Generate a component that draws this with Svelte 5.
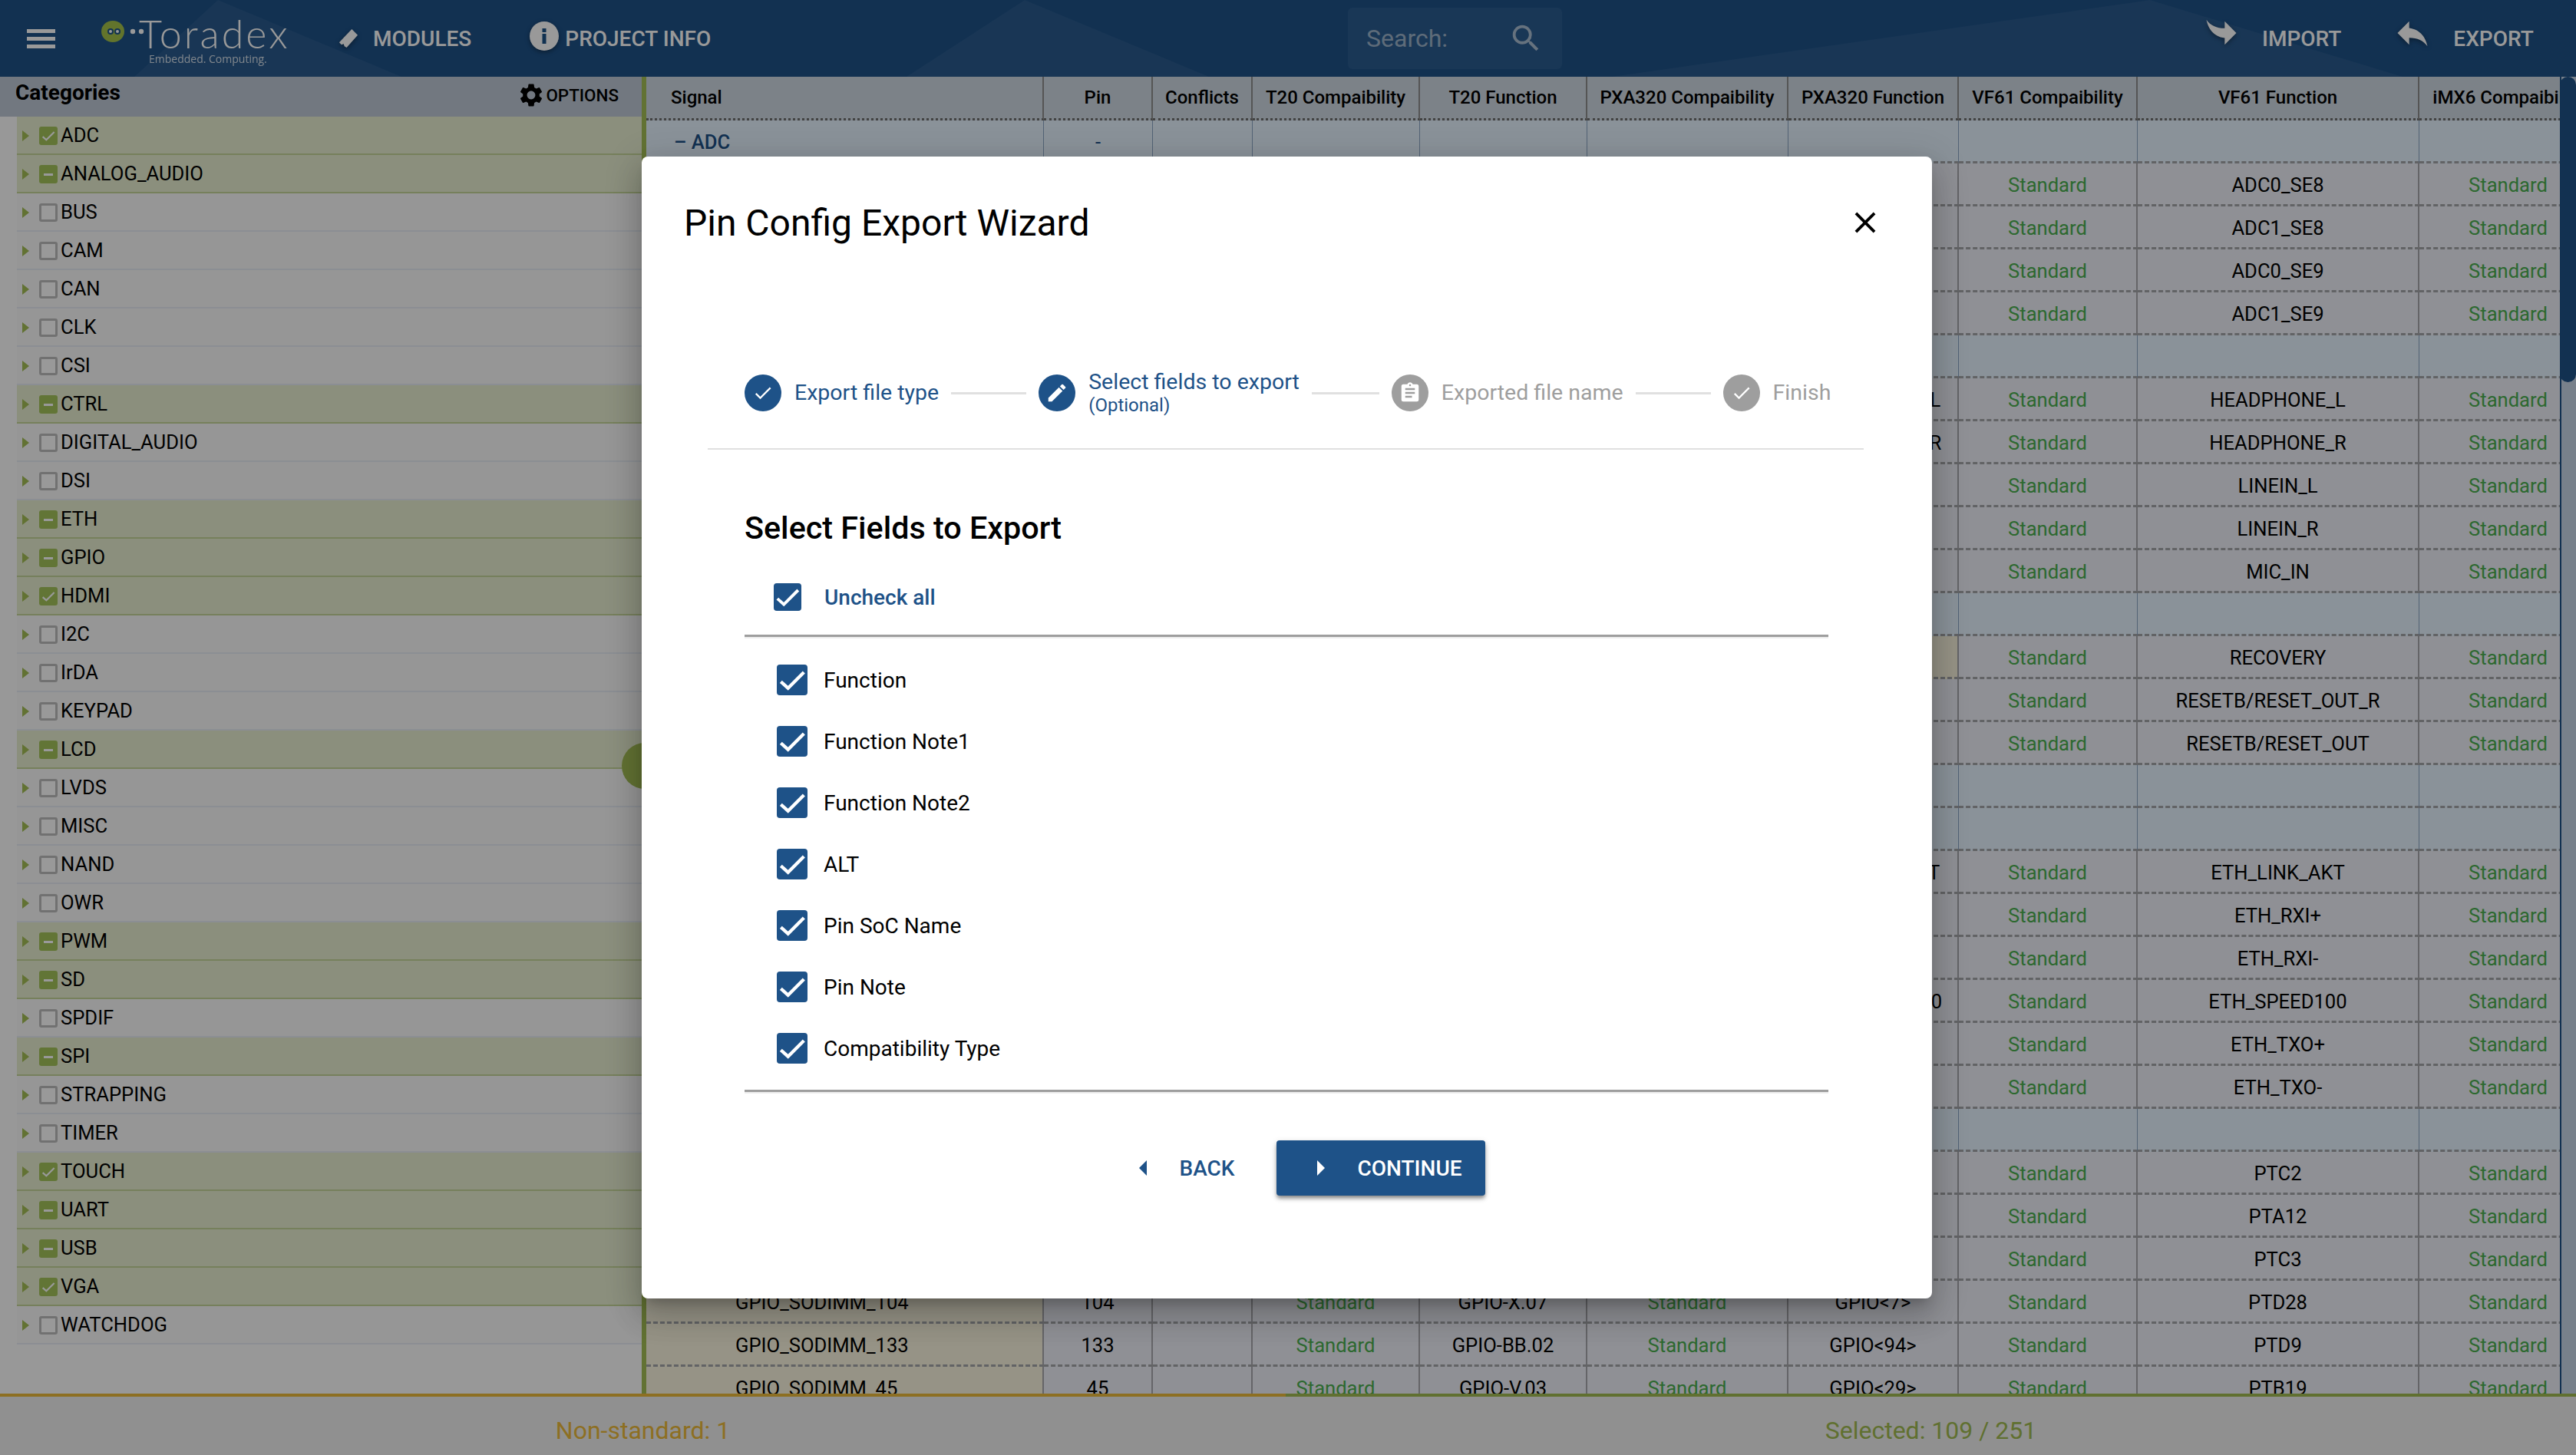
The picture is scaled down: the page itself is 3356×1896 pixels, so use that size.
<script>
	const categories = [
		['ADC', 'all'], ['ANALOG_AUDIO', 'some'], ['BUS', ''], ['CAM', ''], ['CAN', ''], ['CLK', ''], ['CSI', ''],
		['CTRL', 'some'], ['DIGITAL_AUDIO', ''], ['DSI', ''], ['ETH', 'some'], ['GPIO', 'some'], ['HDMI', 'all'],
		['I2C', ''], ['IrDA', ''], ['KEYPAD', ''], ['LCD', 'some'], ['LVDS', ''], ['MISC', ''], ['NAND', ''], ['OWR', ''],
		['PWM', 'some'], ['SD', 'some'], ['SPDIF', ''], ['SPI', 'some'], ['STRAPPING', ''], ['TIMER', ''],
		['TOUCH', 'all'], ['UART', 'some'], ['USB', 'some'], ['VGA', 'all'], ['WATCHDOG', '']
	];

	const columns = [
		'Signal', 'Pin', 'Conflicts', 'T20 Compaibility', 'T20 Function',
		'PXA320 Compaibility', 'PXA320 Function', 'VF61 Compaibility', 'VF61 Function', 'iMX6 Compaibility'
	];

	// only cells not hidden by the dialog carry the full data
	const row = (vf, pxa = '', tan = false) => ({ vf, pxa, tan });
	const pin = (signal, no, t20, pxa, vf) => ({ signal, no, t20, pxa, vf, full: true });
	const group = { group: true };

	const rows = [
		{ group: true, label: 'ADC' },
		row('ADC0_SE8'), row('ADC1_SE8'), row('ADC0_SE9'), row('ADC1_SE9'),
		group,
		row('HEADPHONE_L', 'HEADPHONE_L'), row('HEADPHONE_R', 'HEADPHONE_R'), row('LINEIN_L'), row('LINEIN_R'), row('MIC_IN'),
		group,
		row('RECOVERY', '', true), row('RESETB/RESET_OUT_R'), row('RESETB/RESET_OUT'),
		group, group,
		row('ETH_LINK_AKT', 'ETH_LINK_AKT'), row('ETH_RXI+'), row('ETH_RXI-'), row('ETH_SPEED100', 'ETH_SPEED100'), row('ETH_TXO+'), row('ETH_TXO-'),
		group,
		row('PTC2'), row('PTA12'), row('PTC3'),
		pin('GPIO_SODIMM_104', '104', 'GPIO-X.07', 'GPIO<7>', 'PTD28'),
		pin('GPIO_SODIMM_133', '133', 'GPIO-BB.02', 'GPIO<94>', 'PTD9'),
		pin('GPIO_SODIMM_45', '45', 'GPIO-V.03', 'GPIO<29>', 'PTB19')
	];

	const steps = [
		{ label: 'Export file type', icon: 'done', active: true },
		{ label: 'Select fields to export', sub: '(Optional)', icon: 'edit', active: true },
		{ label: 'Exported file name', icon: 'note' },
		{ label: 'Finish', icon: 'done' }
	];

	const fields = ['Function', 'Function Note1', 'Function Note2', 'ALT', 'Pin SoC Name', 'Pin Note', 'Compatibility Type'];
</script>

{#snippet tick()}
	<svg viewBox="0 0 24 24"><path d="M3.2 13.400l5.600 5L21.200 6" fill="none" stroke="#fff" stroke-width="2.600" /></svg>
{/snippet}

<div class="page">
	<header class="topbar">
		<svg class="facets" viewBox="0 0 3356 100" preserveAspectRatio="none">
			<polygon points="284,0 175,100 523,100" />
			<polygon points="1335,0 1181,100 1575,100" />
			<polygon points="2801,0 2100,100 3130,100" />
		</svg>
		<div class="bar-left">
			<div class="burger"><span></span><span></span><span></span></div>
			<div class="logo">
				<svg class="logo-mark" viewBox="0 0 60 28">
					<ellipse cx="15" cy="14" rx="15" ry="14" fill="#a3c14a" />
					<circle cx="12" cy="14" r="4" fill="#1c5288" />
					<circle cx="21" cy="14" r="4" fill="#1c5288" />
					<circle cx="12" cy="14" r="2" fill="#fff" />
					<circle cx="21" cy="14" r="2" fill="#fff" />
					<circle cx="41" cy="14" r="3.200" fill="#fff" />
					<circle cx="52" cy="14" r="3.200" fill="#fff" />
				</svg>
				<div class="logo-name">Toradex</div>
				<div class="logo-tag">Embedded. Computing.</div>
			</div>
			<div class="nav modules">
				<svg viewBox="0 0 28 28"><path d="M19 1l8 8-15 17-3-2-1-3-3 1-3-3z" fill="#fff" /></svg>
				<span>MODULES</span>
			</div>
			<div class="nav info">
				<svg viewBox="0 0 38 38">
					<circle cx="19" cy="19" r="19" fill="#fff" />
					<rect x="16.500" y="16" width="5" height="13" fill="#1c5288" />
					<rect x="16.500" y="9" width="5" height="5" fill="#1c5288" />
				</svg>
				<span>PROJECT INFO</span>
			</div>
		</div>
		<div class="search">
			<span>Search:</span>
			<svg viewBox="0 0 24 24"><path d="M15.500 14h-.79l-.28-.27A6.470 6.470 0 0 0 16 9.500 6.500 6.500 0 1 0 9.500 16c1.610 0 3.090-.59 4.230-1.570l.27.28v.79l5 4.990L20.490 19l-4.990-5zm-6 0C7.010 14 5 11.990 5 9.500S7.010 5 9.500 5 14 7.010 14 9.500 11.990 14 9.500 14z" /></svg>
		</div>
		<div class="bar-right">
			<div class="nav import">
				<svg viewBox="0 0 24 24"><path d="M14 15v4l7-7-7-7v4.100c-5 0-8.500-1.600-11-5.100 1 5 4 10 11 11z" /></svg>
				<span>IMPORT</span>
			</div>
			<div class="nav export">
				<svg viewBox="0 0 24 24"><path d="M10 9V5l-7 7 7 7v-4.100c5 0 8.500 1.600 11 5.100-1-5-4-10-11-11z" /></svg>
				<span>EXPORT</span>
			</div>
		</div>
	</header>

	<main class="body">
		<aside class="sidebar">
			<div class="side-head">
				<span class="side-title">Categories</span>
				<span class="options">
					<svg viewBox="0 0 24 24"><path d="M19.140 12.940c.04-.3.06-.61.06-.94 0-.32-.02-.64-.07-.94l2.030-1.580a.49.49 0 0 0 .12-.61l-1.920-3.320a.488.488 0 0 0-.59-.22l-2.390.96c-.5-.38-1.030-.7-1.620-.94l-.36-2.540a.484.484 0 0 0-.48-.41h-3.840c-.24 0-.43.17-.47.41l-.36 2.540c-.59.24-1.130.57-1.620.94l-2.390-.96c-.22-.08-.47 0-.59.22L2.740 8.870c-.12.21-.08.47.12.61l2.030 1.580c-.05.3-.09.63-.09.94s.02.64.07.94l-2.030 1.580a.49.49 0 0 0-.12.61l1.920 3.320c.12.22.37.29.59.22l2.390-.96c.5.38 1.030.7 1.620.94l.36 2.540c.05.24.24.41.48.41h3.840c.24 0 .44-.17.47-.41l.36-2.540c.59-.24 1.130-.56 1.620-.94l2.390.96c.22.08.47 0 .59-.22l1.920-3.320c.12-.22.07-.47-.12-.61l-2.010-1.580zM12 15.600c-1.980 0-3.600-1.620-3.600-3.600s1.620-3.600 3.600-3.600 3.600 1.620 3.600 3.600-1.620 3.600-3.600 3.600z" /></svg>
					OPTIONS
				</span>
			</div>
			<ul class="cats">
				{#each categories as [name, state]}
					<li class="cat" class:on={state}>
						<svg class="caret" viewBox="0 0 9 14"><path d="M0 0l9 7-9 7z" /></svg>
						<span class="box {state}">
							{#if state === 'all'}
								{@render tick()}
							{:else if state === 'some'}
								<i></i>
							{/if}
						</span>
						{name}
					</li>
				{/each}
			</ul>
			<div class="fab"><i></i><i></i><i></i></div>
		</aside>

		<section class="grid">
			<div class="table-wrap">
				<table>
					<colgroup>
						<col style="width:518px" /><col style="width:142px" /><col style="width:130px" />
						<col style="width:218px" /><col style="width:218px" /><col style="width:262px" />
						<col style="width:222px" /><col style="width:233px" /><col style="width:367px" />
						<col style="width:233px" />
					</colgroup>
					<thead>
						<tr>
							{#each columns as col, i}
								<th class:first={i === 0}>{col}</th>
							{/each}
						</tr>
					</thead>
					<tbody>
						{#each rows as r}
							{#if r.group}
								<tr class="group">
									<td class="group-name">{#if r.label}– {r.label}{/if}</td>
									<td>{r.label ? '-' : ''}</td>
									{#each Array(8) as _}<td></td>{/each}
								</tr>
							{:else}
								<tr>
									<td class="signal" class:tan={r.full}>{r.signal ?? ''}</td>
									<td>{r.no ?? ''}</td>
									<td></td>
									<td class="std">{r.full ? 'Standard' : ''}</td>
									<td>{r.t20 ?? ''}</td>
									<td class="std">{r.full ? 'Standard' : ''}</td>
									<td class:tan={r.tan}>{r.pxa}</td>
									<td class="std">Standard</td>
									<td>{r.vf}</td>
									<td class="std">Standard</td>
								</tr>
							{/if}
						{/each}
					</tbody>
				</table>
			</div>
			<div class="scroll"><div class="thumb"></div></div>
		</section>
	</main>

	<footer class="totals">
		<div class="warn">Non-standard: 1</div>
		<div class="ok">Selected: 109 / 251</div>
	</footer>

	<div class="backdrop">
		<div class="dialog">
			<div class="dialog-head">
				<h2>Pin Config Export Wizard</h2>
				<svg class="close" viewBox="0 0 24 24"><path d="M19 6.410 17.590 5 12 10.590 6.410 5 5 6.410 10.590 12 5 17.590 6.410 19 12 13.410 17.590 19 19 17.590 13.410 12z" /></svg>
			</div>

			<div class="stepper">
				{#each steps as step, i}
					{#if i > 0}<div class="link"></div>{/if}
					<div class="step" class:active={step.active} class:two-line={step.sub}>
						<span class="dot">
							{#if step.icon === 'done'}
								<svg viewBox="0 0 24 24"><path d="M9 16.200 4.800 12l-1.400 1.400L9 19 21 7l-1.400-1.400z" transform="translate(3.600 3.600) scale(.7)" /></svg>
							{:else if step.icon === 'edit'}
								<svg viewBox="0 0 24 24"><path d="M3 17.250V21h3.750L17.810 9.940l-3.750-3.750L3 17.250zM20.710 7.040a1 1 0 0 0 0-1.410l-2.340-2.340a1 1 0 0 0-1.410 0l-1.830 1.830 3.750 3.750 1.830-1.830z" transform="translate(3 3) scale(.75)" /></svg>
							{:else}
								<svg viewBox="0 0 24 24"><path d="M19 3h-4.180C14.400 1.840 13.300 1 12 1s-2.400.84-2.820 2H5a2 2 0 0 0-2 2v14a2 2 0 0 0 2 2h14a2 2 0 0 0 2-2V5a2 2 0 0 0-2-2zm-7 0a1 1 0 1 1 0 2 1 1 0 0 1 0-2zm2 14H7v-2h7v2zm3-4H7v-2h10v2zm0-4H7V7h10v2z" transform="translate(3 3) scale(.75)" /></svg>
							{/if}
						</span>
						<span class="step-text">
							{step.label}
							{#if step.sub}<small>{step.sub}</small>{/if}
						</span>
					</div>
				{/each}
			</div>

			<div class="fields">
				<h3>Select Fields to Export</h3>
				<div class="check-all">
					<span class="check small">{@render tick()}</span>
					Uncheck all
				</div>
				<div class="rule"></div>
				<ul class="field-list">
					{#each fields as field}
						<li><span class="check">{@render tick()}</span>{field}</li>
					{/each}
				</ul>
				<div class="rule"></div>
				<div class="actions">
					<button class="back">
						<svg viewBox="0 0 10 20"><path d="M10 0L0 10l10 10z" /></svg>
						BACK
					</button>
					<button class="next">
						<svg viewBox="0 0 10 20"><path d="M0 0l10 10L0 20z" /></svg>
						CONTINUE
					</button>
				</div>
			</div>
		</div>
	</div>
</div>

<style>
	:global(body) {
		margin: 0;
		background: #fff;
	}

	.page {
		position: relative;
		display: flex;
		flex-direction: column;
		width: 3356px;
		height: 1896px;
		overflow: hidden;
		font-family: Roboto, "Liberation Sans", sans-serif;
		font-size: 25.6px;
		color: #000;
	}

	/* top bar */
	.topbar {
		position: relative;
		display: flex;
		align-items: center;
		flex: 0 0 100px;
		background: #1e5288;
		color: #fff;
	}

	.facets {
		position: absolute;
		inset: 0;
		width: 100%;
		height: 100%;
		fill: rgba(255, 255, 255, 0.055);
	}

	.bar-left {
		position: relative;
		display: flex;
		align-items: center;
		flex: 0 0 1756px;
	}

	.burger {
		display: flex;
		flex-direction: column;
		gap: 5px;
		width: 37px;
		margin-left: 35px;
	}

	.burger span {
		height: 5px;
		background: #fff;
	}

	.logo {
		position: relative;
		width: 241px;
		height: 70px;
		margin-left: 60px;
	}

	.logo-mark {
		position: absolute;
		left: 0;
		top: 12px;
		width: 60px;
		height: 28px;
	}

	.logo-name {
		position: absolute;
		left: 49px;
		top: 0;
		font-family: Lato, sans-serif;
		font-weight: 300;
		font-size: 52px;
		line-height: 56px;
		letter-spacing: 3px;
		white-space: nowrap;
	}

	.logo-tag {
		position: absolute;
		left: 62px;
		top: 52px;
		font-family: "Open Sans", sans-serif;
		font-size: 14px;
		line-height: 20px;
		opacity: 0.8;
		white-space: nowrap;
	}

	.nav {
		display: flex;
		align-items: center;
		font-weight: 500;
		font-size: 28px;
		white-space: nowrap;
	}

	.nav svg {
		fill: #fff;
		filter: drop-shadow(0 2px 3px rgba(0, 0, 0, 0.4));
	}

	.modules {
		margin-left: 67px;
		gap: 19px;
	}

	.modules svg {
		width: 27px;
		height: 27px;
	}

	.info {
		margin-left: 76px;
		gap: 8px;
	}

	.info svg {
		width: 38px;
		height: 38px;
		margin-top: -6px;
	}

	.search {
		position: relative;
		display: flex;
		align-items: center;
		justify-content: space-between;
		box-sizing: border-box;
		flex: 0 0 279px;
		height: 80px;
		padding: 0 24px;
		border-radius: 6px;
		background: rgba(255, 255, 255, 0.06);
		color: rgba(255, 255, 255, 0.55);
		font-size: 32px;
	}

	.search svg {
		width: 46px;
		height: 46px;
		fill: rgba(255, 255, 255, 0.6);
	}

	.bar-right {
		position: relative;
		display: flex;
		align-items: center;
		margin-left: 833px;
		gap: 67px;
	}

	.bar-right .nav {
		gap: 27px;
	}

	.bar-right svg {
		width: 52px;
		height: 52px;
		margin-top: -14px;
	}

	/* main area */
	.body {
		display: flex;
		flex: 1;
		min-height: 0;
	}

	.sidebar {
		position: relative;
		flex: 0 0 842px;
		box-sizing: border-box;
		border-right: 6px solid #a3be55;
		background: #fdfdfd;
	}

	.side-head {
		display: flex;
		justify-content: space-between;
		box-sizing: border-box;
		height: 52px;
		padding: 0 30px 0 20px;
		background: #bec9d6;
	}

	.side-title {
		font-weight: 700;
		font-size: 28px;
		line-height: 42px;
	}

	.options {
		display: flex;
		align-items: center;
		gap: 1px;
		height: 48px;
		font-size: 22.4px;
		font-weight: 500;
	}

	.options svg {
		width: 36px;
		height: 36px;
	}

	.cats {
		margin: 0;
		padding: 0 0 0 22px;
		list-style: none;
	}

	.cat {
		display: flex;
		align-items: center;
		box-sizing: border-box;
		height: 50px;
		border-bottom: 2px solid #e8edf5;
		background: #fafafa;
	}

	.cat.on {
		border-bottom-color: #c5d69a;
		background: #e8eed0;
	}

	.caret {
		flex: none;
		width: 9px;
		height: 14px;
		margin: 2px 13px 0 7px;
		fill: #a3be55;
	}

	.box {
		display: flex;
		align-items: center;
		justify-content: center;
		box-sizing: border-box;
		flex: none;
		width: 24px;
		height: 24px;
		margin: 2px 4px 0 0;
		border: 3px solid #bdbdbd;
		border-radius: 3px;
		background: #fff;
	}

	.box.all,
	.box.some {
		border: none;
		background: #a3c45a;
	}

	.box svg {
		width: 20px;
		height: 20px;
	}

	.box i {
		width: 12px;
		height: 3px;
		background: #fff;
	}

	.fab {
		position: absolute;
		left: 810px;
		top: 868px;
		display: flex;
		flex-direction: column;
		align-items: center;
		justify-content: center;
		gap: 3px;
		width: 60px;
		height: 60px;
		border-radius: 50%;
		background: #a3be55;
	}

	.fab i {
		width: 6px;
		height: 6px;
		border-radius: 50%;
		background: #fff;
	}

	/* signal table */
	.grid {
		display: flex;
		flex: 1;
		min-width: 0;
		background: #eef0f8;
	}

	.table-wrap {
		flex: 1;
		min-width: 0;
		overflow: hidden;
	}

	table {
		table-layout: fixed;
		width: 2543px;
		border-collapse: separate;
		border-spacing: 0;
	}

	th {
		box-sizing: border-box;
		height: 57px;
		border-right: 2px solid #8e8e8e;
		border-bottom: 3px dotted #6f6f6f;
		background: #cfd9e3;
		font-size: 24px;
		font-weight: 500;
		text-align: center;
		white-space: nowrap;
	}

	th.first {
		padding-left: 32px;
		text-align: left;
	}

	td {
		box-sizing: border-box;
		height: 56px;
		padding: 2px 0 0;
		border-right: 2px solid #a8a8ad;
		border-bottom: 3px dashed #a4a6a9;
		text-align: center;
		white-space: nowrap;
		overflow: hidden;
	}

	td.signal {
		padding-left: 116px;
		text-align: left;
	}

	.tan {
		background: #fbf5df;
	}

	.std {
		color: #4caf50;
	}

	.group td {
		border-right: 1px solid #8aa5c4;
		background: #e6f3ff;
		color: #1e5288;
	}

	td.group-name {
		padding-left: 36px;
		font-weight: 500;
		text-align: left;
	}

	.scroll {
		flex: 0 0 21px;
		box-sizing: border-box;
		border-left: 2px solid #1e5288;
		background: #c8d8e8;
	}

	.thumb {
		height: 398px;
		margin-left: -2px;
		border-radius: 12px;
		background: #1e5288;
	}

	/* footer totals */
	.totals {
		display: flex;
		flex: 0 0 80px;
		font-size: 32px;
		background: #f0f0f0;
	}

	.totals div {
		display: flex;
		align-items: center;
		justify-content: center;
		box-sizing: border-box;
		padding-top: 12px;
		border-top: 4px solid;
	}

	.warn {
		flex: 0 0 1675px;
		color: #ecb93a;
		border-color: #efb82e;
	}

	.ok {
		flex: 1;
		color: #a0bb50;
		border-color: #a0bb50;
	}

	/* dialog */
	.backdrop {
		position: absolute;
		inset: 0;
		display: flex;
		align-items: center;
		justify-content: center;
		padding-right: 3px;
		background: rgba(0, 0, 0, 0.4);
	}

	.dialog {
		width: 1681px;
		height: 1488px;
		border-radius: 8px;
		background: #fff;
		box-shadow: 0 11px 15px -7px rgba(0, 0, 0, 0.2), 0 24px 38px 3px rgba(0, 0, 0, 0.14), 0 9px 46px 8px rgba(0, 0, 0, 0.12);
	}

	.dialog-head {
		display: flex;
		align-items: center;
		justify-content: space-between;
		height: 172px;
		padding: 0 64px 0 55px;
	}

	h2 {
		margin: 0;
		font-size: 48px;
		font-weight: 400;
	}

	.close {
		width: 46px;
		height: 46px;
	}

	.stepper {
		display: flex;
		align-items: flex-start;
		box-sizing: border-box;
		height: 210px;
		margin: 0 89px 0 86px;
		padding: 112px 46px 0 48px;
		border-bottom: 2px solid #e0e0e0;
	}

	.link {
		flex: none;
		width: 98px;
		height: 3px;
		margin: 23px 16px 0;
		background: #e0e0e0;
	}

	.two-line + .link {
		width: 88px;
	}

	.step {
		display: flex;
		gap: 17px;
		color: #9e9e9e;
		font-size: 28.5px;
		white-space: nowrap;
	}

	.step.active {
		color: #1e5288;
	}

	.dot {
		display: flex;
		align-items: center;
		justify-content: center;
		flex: none;
		width: 48px;
		height: 48px;
		border-radius: 50%;
		background: #9e9e9e;
	}

	.active .dot {
		background: #1e5288;
	}

	.dot svg {
		width: 40px;
		height: 40px;
		fill: #fff;
	}

	.step-text {
		line-height: 48px;
	}

	.two-line .step-text {
		margin-top: -7px;
		line-height: 34px;
	}

	.step-text small {
		display: block;
		margin-top: -3px;
		font-size: 24px;
		line-height: 32px;
	}

	.fields {
		padding: 0 135px 0 134px;
	}

	h3 {
		margin: 80px 0 0;
		font-size: 41.3px;
		font-weight: 500;
		line-height: 44px;
	}

	.check-all {
		display: flex;
		align-items: center;
		gap: 30px;
		height: 36px;
		margin-top: 50px;
		padding-left: 38px;
		color: #1e5288;
		font-size: 28px;
		font-weight: 500;
	}

	.rule {
		height: 3px;
		margin-top: 31px;
		background: #9e9e9e;
		box-shadow: 0 2px 0 #eeeeee;
	}

	.check {
		display: flex;
		align-items: center;
		justify-content: center;
		flex: none;
		width: 40px;
		height: 40px;
		border-radius: 4px;
		background: #1e5288;
	}

	.check svg {
		width: 100%;
		height: 100%;
	}

	.check.small {
		width: 36px;
		height: 36px;
	}

	.field-list {
		display: flex;
		flex-direction: column;
		gap: 40px;
		margin: 36px 0 0;
		padding: 0 0 3px 42px;
		list-style: none;
	}

	.field-list li {
		display: flex;
		align-items: center;
		gap: 21px;
		height: 40px;
		font-size: 28px;
	}

	.actions {
		display: flex;
		justify-content: center;
		gap: 25px;
		margin-top: 63px;
		padding-left: 14px;
	}

	button {
		display: flex;
		align-items: center;
		height: 72px;
		padding: 0 30px 0 53px;
		border: none;
		border-radius: 4px;
		background: none;
		color: #1e5288;
		font: 500 28px Roboto, "Liberation Sans", sans-serif;
	}

	button svg {
		width: 10px;
		height: 20px;
		margin-right: 42px;
		fill: currentColor;
	}

	.next {
		background: #1e5288;
		color: #fff;
		box-shadow: 0 4px 4px -1px rgba(0, 0, 0, 0.3), 0 4px 6px rgba(0, 0, 0, 0.16), 0 2px 10px rgba(0, 0, 0, 0.12);
	}
</style>
